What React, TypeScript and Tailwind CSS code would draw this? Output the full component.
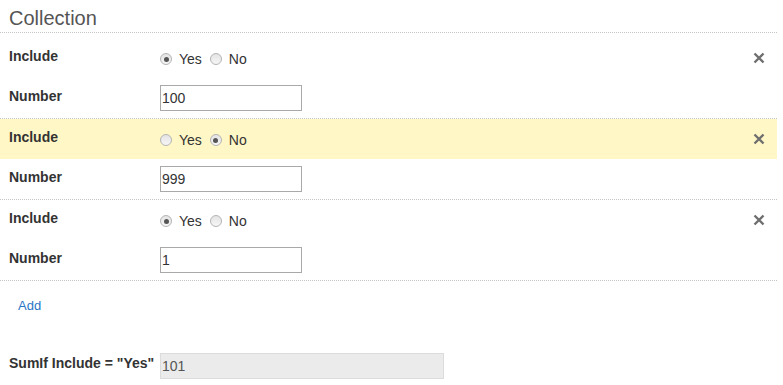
import React from "react";

type Item = { include: boolean; value: string; highlight?: boolean };

const items: Item[] = [
  { include: true, value: "100" },
  { include: false, value: "999", highlight: true },
  { include: true, value: "1" },
];

function Radio({ checked, label }: { checked: boolean; label: string }) {
  return (
    <label className="flex items-center">
      <span className="flex h-[12px] w-[12px] items-center justify-center rounded-full border border-[#b4b4b4] bg-gradient-to-b from-[#e4e4e4] to-[#f6f6f6]">
        {checked && <span className="h-[5px] w-[5px] rounded-full bg-[#555]" />}
      </span>
      <span className="ml-[7px] text-[14px] leading-[18px] text-[#333]">{label}</span>
    </label>
  );
}

function Row({ item, first }: { item: Item; first: boolean }) {
  return (
    <div className={`border-b border-dotted border-[#c4c4c4] ${first ? "pt-[5px]" : ""}`}>
      <div className={`flex h-[40px] items-start ${item.highlight ? "bg-[#fff7c6]" : ""}`}>
        <div className="w-[160px] pl-[9px] pt-[9px] text-[14px] font-bold leading-[18px] text-[#333]">
          Include
        </div>
        <div className="mt-[12px] flex h-[18px] items-center gap-[8px]">
          <Radio checked={item.include} label="Yes" />
          <Radio checked={!item.include} label="No" />
        </div>
        <button className="ml-auto mr-[12px] mt-[14px] h-[12px] w-[12px]">
          <svg viewBox="0 0 12 12" className="h-[12px] w-[12px]">
            <path d="M1.5 1.5 L10.5 10.5 M10.5 1.5 L1.5 10.5" stroke="#6f6f6f" strokeWidth="2.4" />
          </svg>
        </button>
      </div>
      <div className="flex h-[40px] items-start">
        <div className="w-[160px] pl-[9px] pt-[9px] text-[14px] font-bold leading-[18px] text-[#333]">
          Number
        </div>
        <input
          defaultValue={item.value}
          className="mt-[7px] h-[26px] w-[142px] border border-[#a9a9a9] bg-white pl-[1px] text-[14px] text-[#333] outline-none"
        />
      </div>
    </div>
  );
}

export default function App() {
  return (
    <div className="w-[777px] bg-white font-['Liberation_Sans',Arial,sans-serif]">
      <div className="h-[33px] border-b border-dotted border-[#c4c4c4] pl-[9px] pt-[4px] text-[20px] leading-[28px] text-[#555]">
        Collection
      </div>
      {items.map((item, i) => (
        <Row key={i} item={item} first={i === 0} />
      ))}
      <div className="pl-[18px] pt-[12px]">
        <a href="#" className="text-[13px] leading-[18px] text-[#2a75c4]">
          Add
        </a>
      </div>
      <div className="mt-[36px] flex items-start">
        <div className="w-[160px] pl-[9px] pt-[1px] text-[14px] font-bold leading-[18px] text-[#333]">
          SumIf Include = "Yes"
        </div>
        <input
          readOnly
          value="101"
          className="h-[26px] w-[284px] border border-[#dcdcdc] bg-[#ebebeb] pl-[1px] text-[14px] text-[#555] outline-none"
        />
      </div>
    </div>
  );
}
